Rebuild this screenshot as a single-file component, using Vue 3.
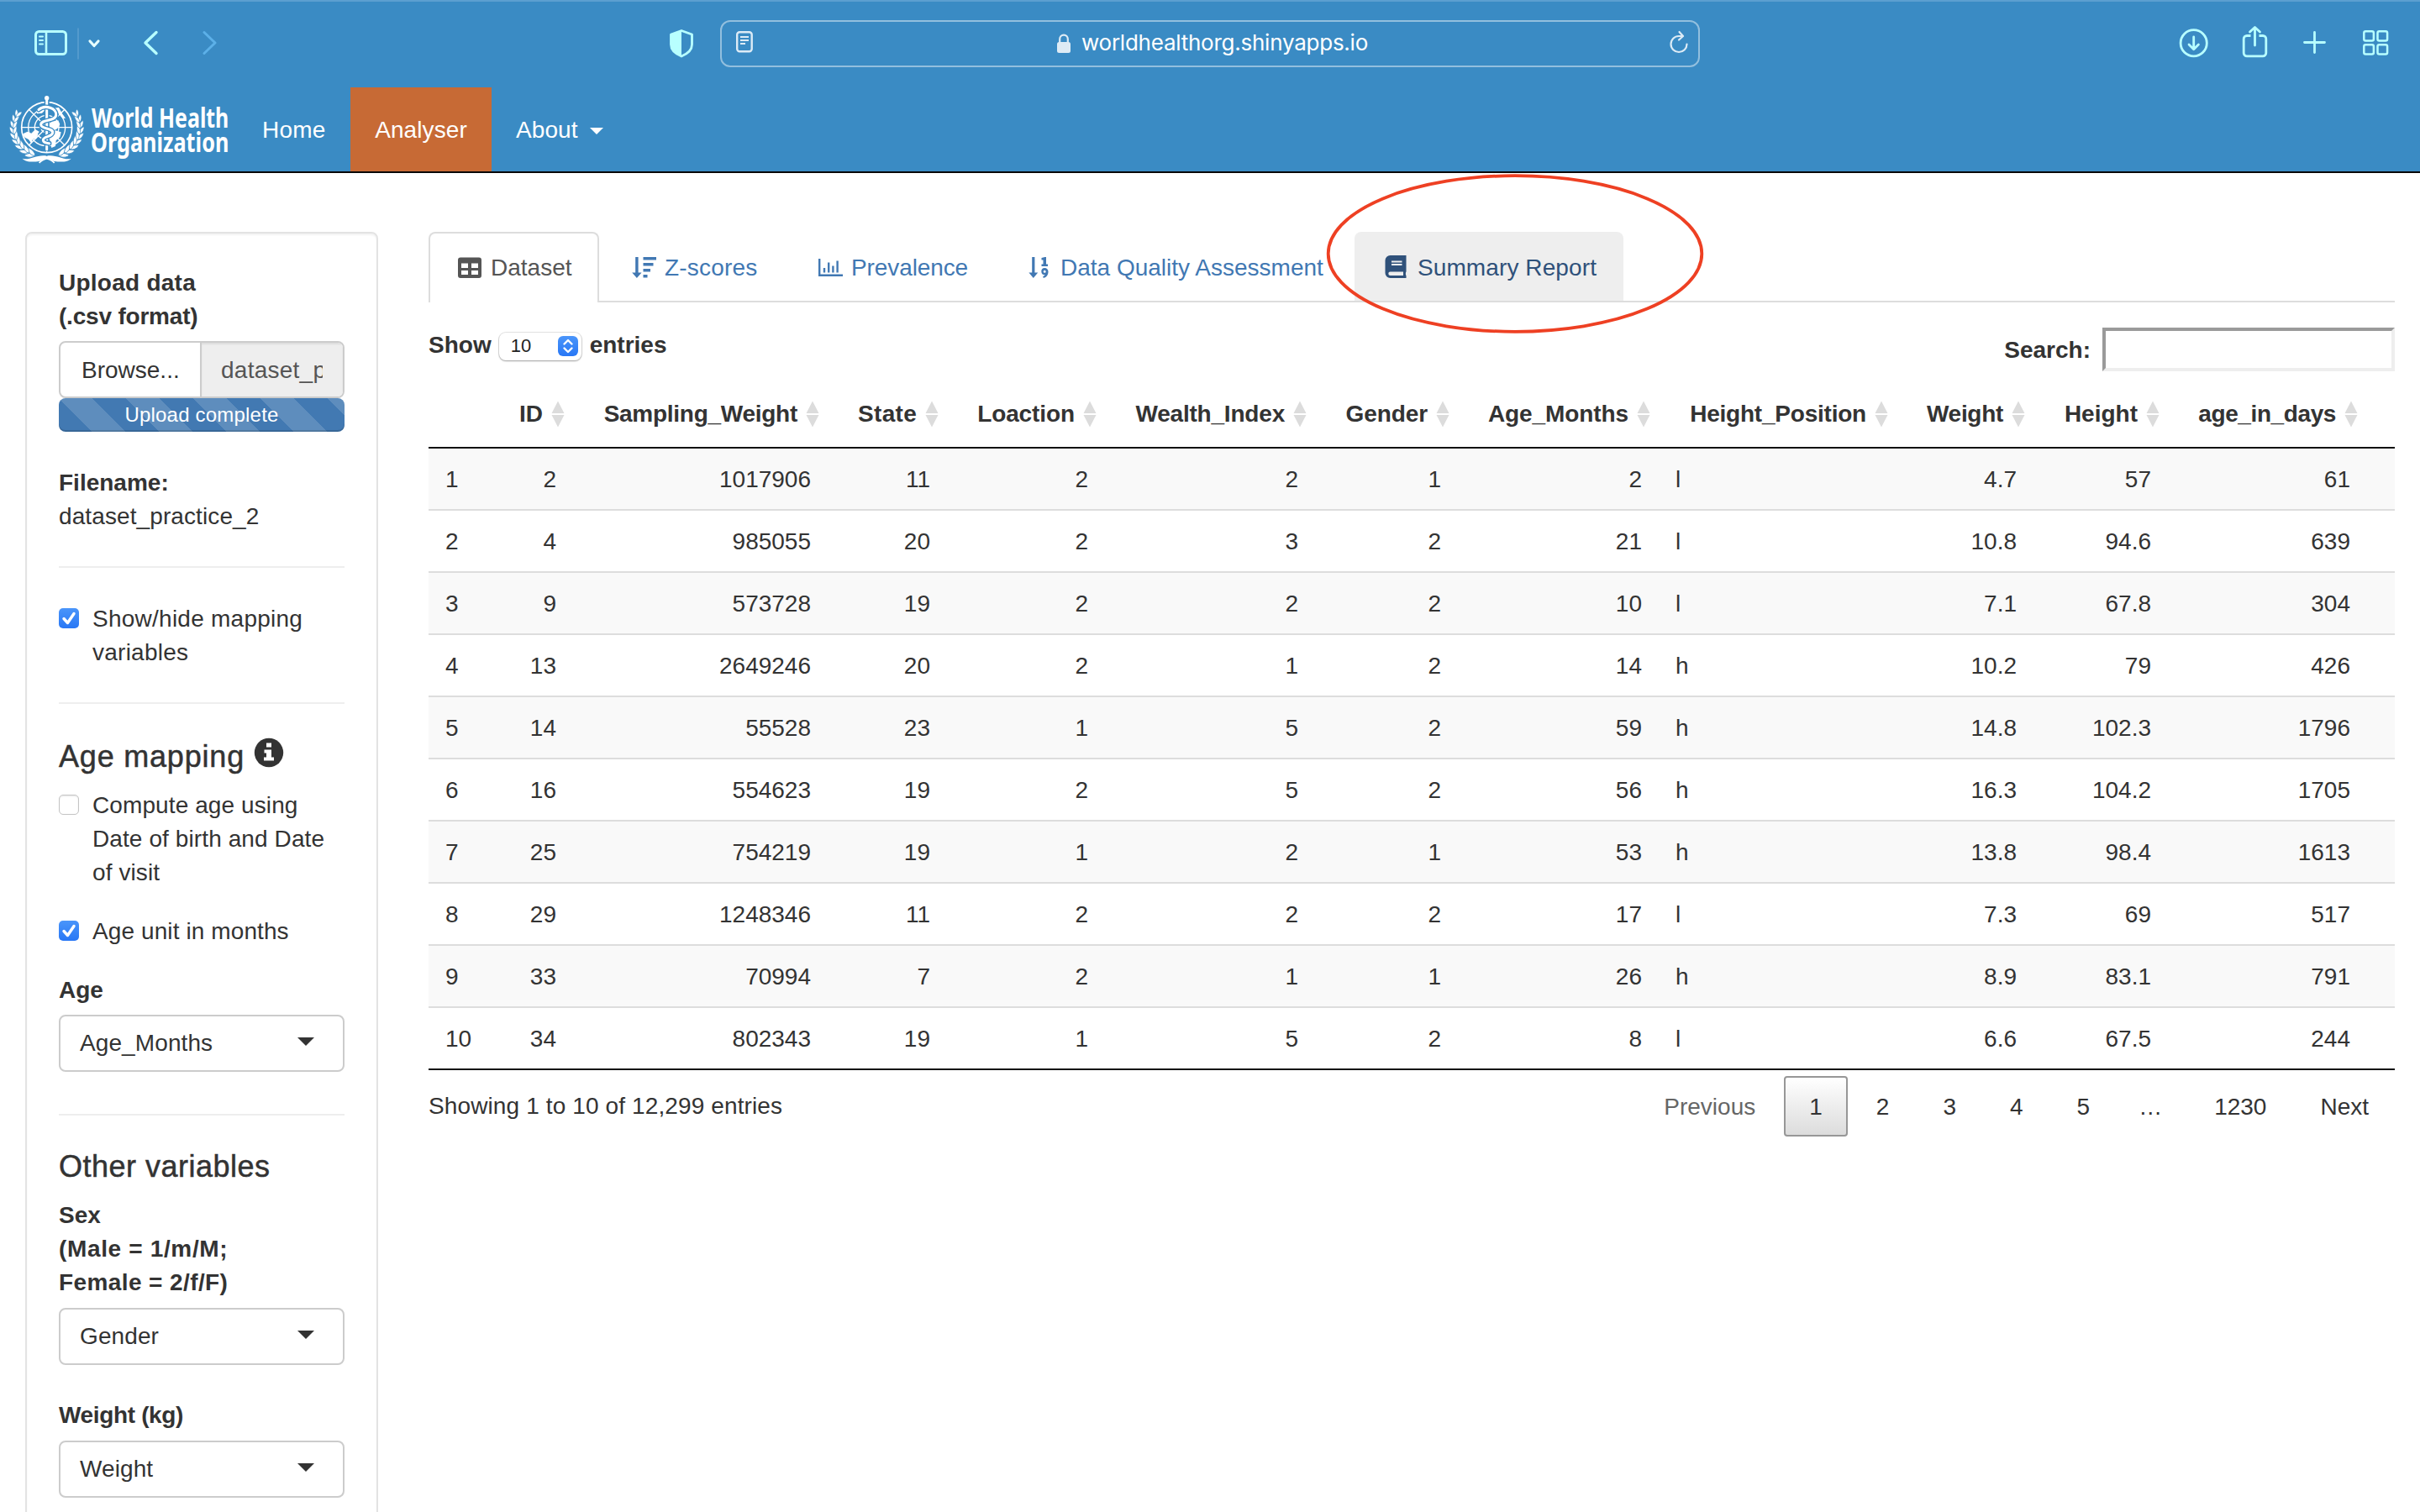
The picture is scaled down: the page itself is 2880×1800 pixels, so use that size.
<script setup>
const leaves = []
const rad = Math.PI / 180
for (let i = 0; i < 9; i++) {
  const a = (112 + i * 11.5) * rad
  const x = 167 + 118 * Math.cos(a)
  const y = 146 + 103 * Math.sin(a)
  const dir = a / rad + 90
  leaves.push({ x, y, r: dir - 24, s: 1 - i * 0.035 })
  leaves.push({ x, y, r: dir + 24, s: 1 - i * 0.035 })
}

const tabs = [
  { id: 'table', label: 'Dataset', width: 203, slot: 42, ls: 0 },
  { id: 'sort', label: 'Z-scores', width: 217, slot: 42, ls: 0.2 },
  { id: 'chart', label: 'Prevalence', width: 245, slot: 43, ls: -0.1 },
  { id: 'num', label: 'Data Quality Assessment', width: 421, slot: 43, ls: 0 },
  { id: 'book', label: 'Summary Report', width: 320, slot: 43, ls: 0.1 },
]

const cols = [
  { name: '', w: 60, ls: 0 },
  { name: 'ID', w: 112, ls: 0 },
  { name: 'Sampling_Weight', w: 303, ls: -0.27 },
  { name: 'State', w: 142, ls: 0.3 },
  { name: 'Loaction', w: 188, ls: -0.1 },
  { name: 'Wealth_Index', w: 250, ls: -0.2 },
  { name: 'Gender', w: 170, ls: -0.1 },
  { name: 'Age_Months', w: 239, ls: -0.1 },
  { name: 'Height_Position', w: 283, ls: -0.22 },
  { name: 'Weight', w: 163, ls: -0.3 },
  { name: 'Height', w: 160, ls: 0 },
  { name: 'age_in_days', w: 270, ls: -0.4 },
]

const rows = [
  [1, 2, 1017906, 11, 2, 2, 1, 2, 'l', 4.7, 57, 61],
  [2, 4, 985055, 20, 2, 3, 2, 21, 'l', 10.8, 94.6, 639],
  [3, 9, 573728, 19, 2, 2, 2, 10, 'l', 7.1, 67.8, 304],
  [4, 13, 2649246, 20, 2, 1, 2, 14, 'h', 10.2, 79, 426],
  [5, 14, 55528, 23, 1, 5, 2, 59, 'h', 14.8, 102.3, 1796],
  [6, 16, 554623, 19, 2, 5, 2, 56, 'h', 16.3, 104.2, 1705],
  [7, 25, 754219, 19, 1, 2, 1, 53, 'h', 13.8, 98.4, 1613],
  [8, 29, 1248346, 11, 2, 2, 2, 17, 'l', 7.3, 69, 517],
  [9, 33, 70994, 7, 2, 1, 1, 26, 'h', 8.9, 83.1, 791],
  [10, 34, 802343, 19, 1, 5, 2, 8, 'l', 6.6, 67.5, 244],
]

const pages = [
  { t: 'Previous', c: 'prev' },
  { t: '1', c: 'current' },
  { t: '2' },
  { t: '3' },
  { t: '4' },
  { t: '5' },
  { t: '…', c: 'dots' },
  { t: '1230' },
  { t: 'Next' },
]
</script>

<template>
  <div class="page">
    <header class="top">
      <div class="toolbar">
        <svg class="tb-left" width="270" height="104" fill="none" stroke="#b8ffff" stroke-width="3" stroke-linecap="round" stroke-linejoin="round">
          <rect x="42.500" y="37.500" width="36" height="27" rx="4" />
          <path d="M55 37.500V64.500" stroke-width="2.600" />
          <path d="M47 43.500h4M47 48h4M47 52.500h4" stroke-width="2" />
          <path d="M93 34V70" stroke="#5d9fd0" stroke-width="1.500" />
          <path d="M107 49l5 5.500 5-5.500" stroke="#e6ffff" stroke-width="3.200" />
          <path d="M186 38.500L173 51l13 12.500" stroke-width="3.400" />
          <path d="M243 38.500L256 51l-13 12.500" stroke="#5cb0e8" stroke-width="3" />
        </svg>
        <svg class="tb-shield" width="32" height="104">
          <path d="M16 36.500L28.500 41V53C28.500 60 22 64.500 16 67C10 64.500 3.500 60 3.500 53V41Z" fill="none" stroke="#b8ffff" stroke-width="2.800" stroke-linejoin="round" />
          <path d="M16 36V67C10 64.500 3.500 60 3.500 53V41Z" fill="#b8ffff" />
        </svg>
        <div class="url">
          <svg width="24" height="30" class="reader" fill="none" stroke="#dcebf6">
            <rect x="2.200" y="2.200" width="17.500" height="23" rx="3" stroke-width="2.400" />
            <path d="M6 8h10M6 12h10M6 16h6" stroke-width="2" />
          </svg>
          <div class="addr">
            <svg width="18" height="26" class="lock">
              <path d="M4.200 12V7.500a4.800 4.800 0 0 1 9.600 0V12" fill="none" stroke="#deebf5" stroke-width="2.200" />
              <rect x="1" y="11" width="16" height="13" rx="2.500" fill="#deebf5" />
            </svg>
            <span class="addr-text">worldhealthorg.shinyapps.io</span>
          </div>
          <svg width="26" height="30" class="reload" fill="none" stroke="#dcebf6" stroke-width="2.200" stroke-linecap="round" stroke-linejoin="round">
            <path d="M21.500 16.500a9.500 9.500 0 1 1-9.500-9.500h4.500" />
            <path d="M12.500 2l4.500 5-5 4.500" />
          </svg>
        </div>
        <svg class="tb-right" width="300" height="60" fill="none" stroke="#b8ffff" stroke-width="2.800" stroke-linecap="round" stroke-linejoin="round">
          <circle cx="40.700" cy="31.200" r="15.600" />
          <path d="M40.700 24v14.500M35 33l5.700 5.700L46.400 33" />
          <path d="M108.500 22.500h-4.500a3.800 3.800 0 0 0-3.800 3.800V43a3.800 3.800 0 0 0 3.800 3.800h19a3.800 3.800 0 0 0 3.800-3.800V26.300a3.800 3.800 0 0 0-3.800-3.800h-4.500" stroke-linecap="butt" />
          <path d="M113.500 34V12.800M107.500 18l6-5.600 6 5.600" />
          <path d="M184.500 18.500v24M172.500 30.500h24" />
          <rect x="243.300" y="17.300" width="11.600" height="11.200" rx="2" stroke-width="2.500" />
          <rect x="259.500" y="17.300" width="11.600" height="11.200" rx="2" stroke-width="2.500" />
          <rect x="243.300" y="33.300" width="11.600" height="11.200" rx="2" stroke-width="2.500" />
          <rect x="259.500" y="33.300" width="11.600" height="11.200" rx="2" stroke-width="2.500" />
        </svg>
      </div>
      <nav class="nav">
        <svg class="logo" width="290" height="100" viewBox="0 0 870 300">
          <g fill="none" stroke="#fff" stroke-width="4">
            <circle cx="167" cy="143" r="90" stroke-width="5" />
            <circle cx="167" cy="143" r="66" />
            <circle cx="167" cy="143" r="43" />
            <circle cx="167" cy="143" r="20" />
            <path d="M77 143H257M167 53V233M103 79L231 207M231 79L103 207" />
          </g>
          <g fill="#fff">
            <path d="M82 166l16-8 14 6 14-14 14 8-6 10-4 14-14 4-4 14-10-14-16-8z" />
            <path d="M130 84l22-18 22-4 6 10-18 8-12 12-18 2z" />
            <path d="M184 76l26-4 12 22 12 16-10 2-14-20-14-6z" />
            <path d="M176 128l18-8 14-2 6 14-10 16-14 8-14-6z" />
            <path d="M180 160l18-6 20 6-4 18-14 12-2 20-14 6-6-24z" />
            <g v-for="(l, i) in leaves" :key="i">
              <path d="M-3 0C3 -9 24 -11 36 0C24 9 3 8 -3 0Z" :transform="`translate(${l.x} ${l.y}) rotate(${l.r}) scale(${l.s})`" stroke="#3a8bc4" stroke-width="2.500" />
              <path d="M-3 0C3 -9 24 -11 36 0C24 9 3 8 -3 0Z" :transform="`translate(334 0) scale(-1 1) translate(${l.x} ${l.y}) rotate(${l.r}) scale(${l.s})`" stroke="#3a8bc4" stroke-width="2.500" />
            </g>
            <path d="M80 254C104 262 130 240 162 244C180 250 170 256 140 264C114 268 90 266 80 254Z" />
            <path d="M254 254C230 262 204 240 172 244C154 250 164 256 194 264C220 268 244 266 254 254Z" />
          </g>
          <path d="M140 270C150 256 170 256 180 248M194 270C184 256 164 256 154 248" fill="none" stroke="#fff" stroke-width="5" />
          <path d="M167 38V228" stroke="#3a8bc4" stroke-width="18" />
          <path d="M167 38V222" stroke="#fff" stroke-width="9" stroke-linecap="round" />
          <circle cx="167" cy="38" r="8" fill="#fff" />
          <g fill="none" stroke-linecap="round">
            <path d="M138 80C160 60 204 74 200 100C196 124 146 112 146 134C148 150 190 144 188 162C186 178 154 174 154 188C154 196 166 200 176 200" stroke="#3a8bc4" stroke-width="17" />
            <path d="M138 80C160 60 204 74 200 100C196 124 146 112 146 134C148 150 190 144 188 162C186 178 154 174 154 188C154 196 166 200 176 200" stroke="#fff" stroke-width="9" />
          </g>
          <text x="327" y="143" textLength="490" lengthAdjust="spacingAndGlyphs" class="logo-text">World Health</text>
          <text x="324" y="230" textLength="493" lengthAdjust="spacingAndGlyphs" class="logo-text">Organization</text>
        </svg>
        <a class="nav-item home">Home</a>
        <a class="nav-item active">Analyser</a>
        <a class="nav-item about">About<i class="caret"></i></a>
      </nav>
    </header>

    <div class="body">
      <aside class="well">
        <label class="lbl"><span class="wide2">Upload data</span><br /><span class="tight2">(.csv format)</span></label>
        <div class="file">
          <span class="browse">Browse...</span>
          <span class="fname"><span class="clip">dataset_practice_2.csv</span></span>
        </div>
        <div class="progress">Upload complete</div>
        <div class="filename"><b>Filename:</b><br /><span class="fn">dataset_practice_2</span></div>
        <hr class="hr h1" />
        <div class="check">
          <svg width="24" height="24" class="cb on"><path d="M6 12.500l4.500 5L18 6.500" /></svg>
          <span class="wide2">Show/hide mapping<br />variables</span>
        </div>
        <hr class="hr h2" />
        <h4 class="h4">
          <span class="wide7">Age mapping</span>
          <svg width="36" height="36" class="info" viewBox="0 0 36 36">
            <circle cx="18" cy="18" r="17.200" fill="#333" />
            <path d="M15 6.500h6v5h-6zM12.500 14.500h8.500v9h3v4H12v-4h3v-5h-2.500z" fill="#fff" />
          </svg>
        </h4>
        <div class="check">
          <span class="cb empty"></span>
          <span class="wide1">Compute age using<br />Date of birth and Date<br />of visit</span>
        </div>
        <div class="check unit">
          <svg width="24" height="24" class="cb on"><path d="M6 12.500l4.500 5L18 6.500" /></svg>
          <span class="wide1">Age unit in months</span>
        </div>
        <label class="lbl age">Age</label>
        <div class="select"><span>Age_Months</span><i class="arrow"></i></div>
        <hr class="hr h3" />
        <h4 class="h4 other">Other variables</h4>
        <label class="lbl sex">Sex<br /><span class="wide6">(Male = 1/m/M;</span><br /><span class="wide3">Female = 2/f/F)</span></label>
        <div class="select"><span>Gender</span><i class="arrow"></i></div>
        <label class="lbl weight">Weight (kg)</label>
        <div class="select"><span>Weight</span><i class="arrow"></i></div>
      </aside>

      <main class="main">
        <div class="tabs">
          <div v-for="t in tabs" :key="t.id" class="tab" :class="'tab-' + t.id" :style="{ width: t.width + 'px', letterSpacing: t.ls + 'px' }">
            <span class="slot" :style="{ width: t.slot + 'px' }">
              <svg v-if="t.id === 'table'" width="34" height="40" class="ic"><path fill-rule="evenodd" d="M6 7.500h22a3 3 0 0 1 3 3v18.500a3 3 0 0 1-3 3H6a3 3 0 0 1-3-3v-18.500a3 3 0 0 1 3-3zM7 14.500v5.500h8v-5.500zM19 14.500v5.500h8v-5.500zM7 23v5h8V23zM19 23v5h8V23z" /></svg>
              <svg v-else-if="t.id === 'sort'" width="36" height="40" class="ic shift"><path d="M8.200 7h3.400v18.500h4L9.900 32 4.200 25.500h4zM17.500 7h15.500v3.500h-15.500zM17.500 14h12v3.500h-12zM17.500 21h8.500v3.500h-8.500zM17.500 28h5v3.500h-5z" /></svg>
              <svg v-else-if="t.id === 'chart'" width="36" height="40" class="ic"><path d="M4 9h2.400v18.500H33V30H4zM9.800 20h2.400v5.500H9.800zM15 13.500h2.400v12H15zM20.200 17.500h2.400v8h-2.400zM25.400 11.500h2.400v14h-2.400z" /></svg>
              <svg v-else-if="t.id === 'num'" width="34" height="40" class="ic shift">
                <path d="M10.200 7h3.200v18.500h3.800L11.800 32 6.400 25.500h3.800z" />
                <path d="M21.500 8l4-1h1.500v8.500h2v2.500h-7.500V15.500h2v-5h-2z" />
                <path fill-rule="evenodd" d="M25.200 20a4.200 4.200 0 0 1 4.300 4.300c0 4-2 6.800-5.700 7.600l-.6-2c1.300-.4 2-1 2.400-1.700a4.100 4.100 0 1 1-.4-8.200zm0 2.700a1.500 1.500 0 1 0 .01 3.010 1.500 1.500 0 0 0-.01-3.010z" />
              </svg>
              <svg v-else width="32" height="40" class="ic"><path fill-rule="evenodd" d="M10.500 5H29.500V24.500c-.8.400-.8 4 0 4.600v2.900H10.500a6 6 0 0 1-6-6v-15a6 6 0 0 1 6-6zM10.500 24.500a2 2 0 0 0 0 4.400h15.500V24.500zM12 11.500v2h12.500v-2zM12 15v2h12.500v-2z" /></svg>
            </span>
            <span class="tab-label">{{ t.label }}</span>
          </div>
        </div>

        <div class="controls">
          <div class="length">
            <b>Show</b>
            <span class="len-select"><span>10</span>
              <svg width="24" height="24" class="stepper"><path d="M7.500 9.500L12 5l4.500 4.500M7.500 14.500L12 19l4.500-4.500" /></svg>
            </span>
            <b>entries</b>
          </div>
          <div class="search"><b>Search:</b><span class="box"></span></div>
        </div>

        <table class="grid">
          <colgroup><col v-for="(c, i) in cols" :key="i" :style="{ width: c.w + 'px' }" /></colgroup>
          <thead>
            <tr>
              <th v-for="(c, i) in cols" :key="i">
                <span v-if="c.name" class="th" :style="{ letterSpacing: c.ls + 'px' }">{{ c.name }}<svg width="16" height="32" class="sorter"><path d="M8 .5L15.500 15H.5zM8 31.500L15.500 17H.5z" /></svg></span>
              </th>
            </tr>
          </thead>
          <tbody>
            <tr v-for="r in rows" :key="r[0]">
              <td v-for="(v, i) in r" :key="i">{{ v }}</td>
            </tr>
          </tbody>
        </table>

        <div class="foot">
          <span class="showing">Showing 1 to 10 of 12,299 entries</span>
          <div class="pager">
            <span v-for="p in pages" :key="p.t" class="pg" :class="p.c">{{ p.t }}</span>
          </div>
        </div>
      </main>
    </div>

    <svg class="ring" width="452" height="196"><ellipse cx="226" cy="98" rx="222.300" ry="92.800" /></svg>
  </div>
</template>

<style>
body { margin: 0; background: #fff; }
</style>

<style scoped>
.page { position: relative; width: 2880px; height: 1800px; overflow: hidden; background: #fff; font-family: "Liberation Sans", Arial, sans-serif; font-size: 28px; line-height: 40px; color: #333; }
.wide1 { letter-spacing: .1px; }
.wide2 { letter-spacing: .25px; }
.wide3 { letter-spacing: .4px; }
.wide6 { letter-spacing: .65px; }
.wide7 { letter-spacing: .8px; }
.tight2 { letter-spacing: -.2px; }
.top { box-sizing: border-box; height: 206px; background: #3a8bc4; border-top: 2px solid #5c9fd0; border-bottom: 2px solid #080808; }
.toolbar { display: flex; height: 102px; }
.toolbar svg { flex: none; display: block; }
.tb-left { margin-top: -2px; }
.tb-shield { margin: -2px 0 0 525px; }
.url { box-sizing: border-box; display: flex; align-items: center; justify-content: space-between; width: 1166px; height: 56px; margin: 22px 0 0 30px; padding: 0 9px 0 16px; border: 2px solid rgba(255,255,255,.45); border-radius: 12px; }
.reader, .reload { margin-top: -3px; }
.addr { display: flex; align-items: center; font-family: Inter, sans-serif; font-size: 26px; color: #fff; }
.addr-text { margin-left: 12px; letter-spacing: -.24px; white-space: nowrap; line-height: 38px; padding-bottom: 2px; }
.tb-right { margin: 18px 0 0 547px; }
.nav { display: flex; height: 100px; color: #fff; }
.logo { display: block; }
.logo-text { font-family: "Noto Sans", sans-serif; font-weight: 700; font-size: 95px; fill: #fff; }
.nav-item { box-sizing: border-box; height: 100px; line-height: 101px; }
.home { width: 127px; padding-left: 22px; letter-spacing: .2px; }
.active { width: 168px; background: #c76a35; text-align: center; letter-spacing: .1px; }
.about { padding-left: 29px; display: flex; align-items: center; letter-spacing: .1px; }
.caret { margin-left: 14px; margin-top: 4px; border: 8px solid transparent; border-top-color: #fff; border-bottom: 0; }
.body { display: flex; align-items: flex-start; padding: 70px 0 0 30px; }
.well { box-sizing: border-box; width: 420px; height: 1700px; padding: 38px; border: 2px solid #e3e3e3; border-radius: 8px; box-shadow: inset 0 2px 2px rgba(0,0,0,.05); }
.lbl { display: block; font-weight: 700; margin-bottom: 9px; padding-top: 1px; }
.file { display: flex; height: 68px; box-sizing: border-box; border: 2px solid #ccc; border-radius: 8px; line-height: 65px; overflow: hidden; }
.browse { width: 168px; box-sizing: border-box; padding-left: 25px; border-right: 2px solid #ccc; }
.fname { flex: 1; background: #eee; color: #555; padding: 0 24px 0 23px; overflow: hidden; box-shadow: inset 0 2px 2px rgba(0,0,0,.075); }
.clip { display: block; overflow: hidden; white-space: nowrap; letter-spacing: .25px; }
.progress { height: 40px; border-radius: 8px; color: #fff; font-size: 24px; line-height: 40px; letter-spacing: .2px; text-align: center; background-color: #4279b2; background-image: linear-gradient(45deg, rgba(255,255,255,.15) 25%, transparent 25%, transparent 50%, rgba(255,255,255,.15) 50%, rgba(255,255,255,.15) 75%, transparent 75%, transparent); background-size: 80px 80px; background-position: 0 0; box-shadow: inset 0 -2px 0 rgba(0,0,0,.15); }
.filename { padding-top: 41px; margin-bottom: -1px; }
.fn { letter-spacing: .1px; }
.hr { border: 0; height: 2px; background: #eee; margin: 0; }
.h1 { margin: 40px 0 40px; }
.h2 { margin: 40px 0 40px; }
.h3 { margin: 50px 0 40px; }
.check { display: flex; gap: 16px; }
.cb { flex: none; width: 24px; height: 24px; box-sizing: border-box; border-radius: 5px; margin-top: 8px; }
.check > span:last-child { padding-top: 1px; margin-bottom: -1px; }
.on { background: linear-gradient(#4a95fa, #2877f5); }
.on path { fill: none; stroke: #fff; stroke-width: 3.400px; stroke-linecap: round; stroke-linejoin: round; }
.empty { border: 1.500px solid #c4c4c4; background: #fff; box-shadow: inset 0 1px 2px rgba(0,0,0,.1); }
.unit { margin-top: 30px; }
.h4 { display: flex; margin: 0 0 17px; padding-top: 3px; font-size: 36px; font-weight: 400; line-height: 39.600px; -webkit-text-stroke: .5px #333; }
.other { line-height: 39px; padding-top: 1px; margin-bottom: 19px; letter-spacing: .5px; }
.info { margin: -3px 0 0 11px; }
.age { margin-top: 30px; }
.sex { padding-top: 0; margin-bottom: 10px; }
.weight { margin-top: 40px; padding-top: 0; margin-bottom: 10px; letter-spacing: -.35px; }
.select { box-sizing: border-box; display: flex; justify-content: space-between; align-items: center; height: 68px; padding: 0 34px 0 23px; border: 2px solid #ccc; border-radius: 8px; }
.select span { padding-top: 1px; letter-spacing: .1px; }
.arrow { border: 10px solid transparent; border-top-color: #333; border-bottom: 0; margin-top: -4px; }
.main { width: 2340px; margin-left: 60px; }
.tabs { display: flex; gap: 4px; height: 84px; box-sizing: border-box; border-bottom: 2px solid #ddd; color: #4178b3; }
.tab { box-sizing: border-box; display: flex; align-items: center; flex: none; height: 84px; padding-left: 30px; border: 2px solid transparent; border-bottom: 0; border-radius: 8px 8px 0 0; white-space: nowrap; }
.tab-table { background: #fff; border-color: #ddd; color: #555; }
.tab-book { background: #eee; color: #2f517a; height: 82px; }
.tab-book .slot, .tab-book .tab-label { margin-top: 2px; }
.slot { flex: none; height: 40px; }
.ic { display: block; fill: currentColor; }
.shift { margin-left: -1px; }
.controls { display: flex; justify-content: space-between; height: 82px; }
.length { display: flex; align-items: center; height: 40px; margin-top: 31px; }
.len-select { box-sizing: border-box; display: flex; align-items: center; justify-content: space-between; width: 98px; height: 33px; margin: 2px 10px 0 9px; padding: 0 4px 0 14px; font-size: 22px; color: #222; border-radius: 8px; box-shadow: 0 0 0 1px rgba(0,0,0,.1), 0 1px 2px rgba(0,0,0,.3); }
.stepper { border-radius: 6px; background: linear-gradient(#4a95fa, #2877f5); }
.stepper path { fill: none; stroke: #fff; stroke-width: 2.400px; stroke-linecap: round; stroke-linejoin: round; }
.search { display: flex; align-items: center; height: 52px; margin-top: 30px; }
.search b { padding-top: 1px; }
.box { box-sizing: border-box; width: 348px; height: 52px; margin-left: 14px; border: 4px solid; border-color: #9a9a9a #eee #eee #9a9a9a; }
.grid { width: 2340px; table-layout: fixed; border-collapse: separate; border-spacing: 0; }
th { height: 90px; padding: 0; border-bottom: 2px solid #111; text-align: right; vertical-align: top; white-space: nowrap; }
.th { display: flex; justify-content: flex-end; align-items: center; padding-top: 1px; margin-top: 30px; height: 40px; padding-right: 10px; }
th:last-child .th { padding-right: 44px; }
.sorter { margin-left: 10px; fill: #dcdcdc; flex: none; }
td { height: 71px; padding: 1px 20px 0; text-align: right; border-top: 2px solid #ddd; }
tbody tr:first-child td { border-top: 0; }
tbody tr:nth-child(odd) td { background: #f9f9f9; }
tbody tr:last-child td { border-bottom: 2px solid #111; }
td:first-child { padding-right: 0; text-align: left; }
td:nth-child(9) { text-align: left; }
td:last-child { padding-right: 53px; }
.foot { display: flex; justify-content: space-between; height: 84px; }
.showing { margin-top: 23px; letter-spacing: .12px; }
.pager { display: flex; gap: 4px; margin: 7px 1px 0 0; }
.pg { box-sizing: border-box; height: 72px; line-height: 69px; padding: 0 28px; border: 2px solid transparent; border-radius: 4px; }
.prev { color: #666; }
.current { border-color: #979797; background: linear-gradient(#fff, #dcdcdc); }
.dots { padding: 0 26px 0 22px; }
.ring { position: absolute; left: 1577px; top: 204px; }
.ring ellipse { fill: none; stroke: #ee4023; stroke-width: 3.800px; }
</style>
